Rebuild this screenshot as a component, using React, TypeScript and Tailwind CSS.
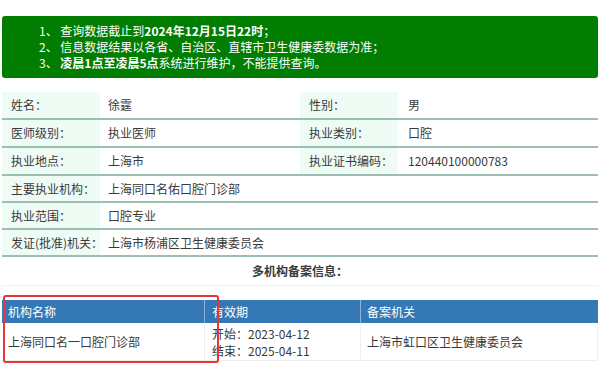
const font = { fontFamily: '"Microsoft YaHei", "Noto Sans CJK SC", "Noto Sans", sans-serif' };

type Cell = { label: string; value: string };

const pairRows: [Cell, Cell][] = [
  [
    { label: "姓名：", value: "徐霆" },
    { label: "性别：", value: "男" },
  ],
  [
    { label: "医师级别：", value: "执业医师" },
    { label: "执业类别：", value: "口腔" },
  ],
  [
    { label: "执业地点：", value: "上海市" },
    { label: "执业证书编码：", value: "120440100000783" },
  ],
];

const wideRows: Cell[] = [
  { label: "主要执业机构：", value: "上海同口名佑口腔门诊部" },
  { label: "执业范围：", value: "口腔专业" },
  { label: "发证(批准)机关：", value: "上海市杨浦区卫生健康委员会" },
];

function Label({ text }: { text: string }) {
  return (
    <div className="w-[98px] shrink-0 bg-[#effcf6] pl-[9px] flex items-center whitespace-nowrap">
      {text}
    </div>
  );
}

export default function App() {
  return (
    <div
      className="w-[600px] h-[370px] bg-white text-[12px] text-[#3a3a3a] overflow-hidden"
      style={font}
    >
      {/* 提示 */}
      <div className="mx-[2px] mt-[16px] h-[62px] rounded-[3px] bg-[#017d01] text-white pl-[37px] pt-[7px] leading-[16px]">
        <p>
          1、 查询数据截止到<b>2024年12月15日22时</b>；
        </p>
        <p>2、 信息数据结果以各省、自治区、直辖市卫生健康委数据为准；</p>
        <p>
          3、 <b>凌晨1点至凌晨5点</b>系统进行维护，不能提供查询。
        </p>
      </div>

      {/* 基本信息 */}
      <div className="mx-[2px] mt-[14px]">
        {pairRows.map(([a, b]) => (
          <div
            key={a.label}
            className="flex h-[28px] border-b-2 border-[#9bbfb1]"
          >
            <div className="flex w-[298px]">
              <Label text={a.label} />
              <div className="flex items-center pl-[8px]">{a.value}</div>
            </div>
            <div className="flex flex-1">
              <Label text={b.label} />
              <div className="flex items-center pl-[10px]">{b.value}</div>
            </div>
          </div>
        ))}
        {wideRows.map((r) => (
          <div
            key={r.label}
            className="flex h-[27px] border-b-2 border-[#9bbfb1]"
          >
            <Label text={r.label} />
            <div className="flex items-center pl-[8px]">{r.value}</div>
          </div>
        ))}
        <div className="h-[29px] flex items-center justify-center font-bold border-b border-[#f0f0f0]">
          多机构备案信息：
        </div>
      </div>

      {/* 多机构备案 */}
      <div className="relative mx-[2px] mt-[14px]">
        <div className="flex h-[23px] bg-[#3479b5] text-white">
          <div className="w-[203px] flex items-center pl-[6px] border-r border-[#8db4d8]">
            机构名称
          </div>
          <div className="w-[156px] flex items-center pl-[7px] border-r border-[#8db4d8]">
            有效期
          </div>
          <div className="flex-1 flex items-center pl-[6px]">备案机关</div>
        </div>
        <div className="flex h-[38px] border-b border-[#eee]">
          <div className="w-[203px] flex items-center pl-[6px] border-r border-[#eee]">
            上海同口名一口腔门诊部
          </div>
          <div className="w-[156px] flex flex-col justify-center pl-[7px] border-r border-[#eee] leading-[17px]">
            <span>开始：2023-04-12</span>
            <span>结束：2025-04-11</span>
          </div>
          <div className="flex-1 flex items-center pl-[6px] border-r border-[#eee]">
            上海市虹口区卫生健康委员会
          </div>
        </div>
        <div className="absolute left-[1px] top-[-5px] w-[216px] h-[68px] border-2 border-[#e8353a] rounded-[3px] pointer-events-none" />
      </div>
    </div>
  );
}
